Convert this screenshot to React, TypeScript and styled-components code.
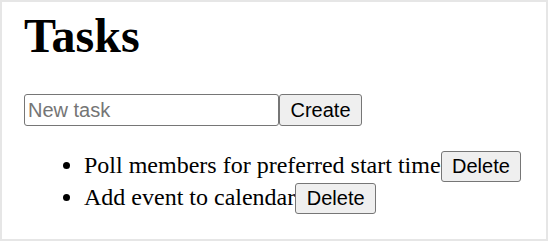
import { useState } from "react";
import styled, { createGlobalStyle } from "styled-components";

const GlobalStyle = createGlobalStyle`
  html, body {
    margin: 0;
    padding: 0;
    background: #ffffff;
  }
  body {
    font-family: "Liberation Serif", "Times New Roman", serif;
    color: #000000;
  }
`;

const Frame = styled.div`
  box-sizing: border-box;
  width: 548px;
  height: 241px;
  border: 2px solid #e6e6e6;
  padding: 7px 22px 0;
  overflow: hidden;
`;

const Title = styled.h1`
  margin: 0 0 32px;
  font-size: 48px;
  font-weight: bold;
  line-height: 53px;
`;

const TaskForm = styled.form`
  display: flex;
  align-items: stretch;
  height: 32px;
`;

const TaskInput = styled.input`
  box-sizing: border-box;
  width: 255px;
  height: 32px;
  margin: 0;
  padding: 1px 3px;
  font-family: "Liberation Sans", Arial, sans-serif;
  font-size: 20px;
  color: #000;
  border: 1.5px solid #767676;
  border-radius: 3px;
  outline: none;

  &::placeholder {
    color: #757575;
  }
`;

const Button = styled.button<{ $h?: number }>`
  box-sizing: border-box;
  height: ${(p) => p.$h ?? 32}px;
  margin: 0;
  padding: 1px 10.5px;
  font-family: "Liberation Sans", Arial, sans-serif;
  font-size: 20px;
  color: #000;
  background: #efefef;
  border: 1.5px solid #767676;
  border-radius: 3px;
  cursor: pointer;
`;

const TaskList = styled.ul`
  margin: 24px 0 0;
  padding-left: 60px;
  font-size: 24px;
  line-height: 31px;

  & > li {
    height: 31.5px;
  }
`;

type Task = { id: number; text: string };

const App = (): JSX.Element => {
  const [text, setText] = useState("");
  const [tasks, setTasks] = useState<Task[]>([
    { id: 1, text: "Poll members for preferred start time" },
    { id: 2, text: "Add event to calendar" },
  ]);

  const createHandler = (e: React.FormEvent) => {
    e.preventDefault();
    if (!text.trim()) return;
    setTasks([...tasks, { id: Date.now(), text }]);
    setText("");
  };

  return (
    <>
      <GlobalStyle />
      <Frame>
        <Title>Tasks</Title>
        <TaskForm onSubmit={createHandler}>
          <TaskInput
            placeholder="New task"
            value={text}
            onChange={(e) => setText(e.target.value)}
          />
          <Button type="submit">Create</Button>
        </TaskForm>
        <TaskList>
          {tasks.map((task) => (
            <li key={task.id}>
              {task.text}
              <Button
                $h={31}
                onClick={() => setTasks(tasks.filter((t) => t.id !== task.id))}
              >
                Delete
              </Button>
            </li>
          ))}
        </TaskList>
      </Frame>
    </>
  );
};

export default App;
